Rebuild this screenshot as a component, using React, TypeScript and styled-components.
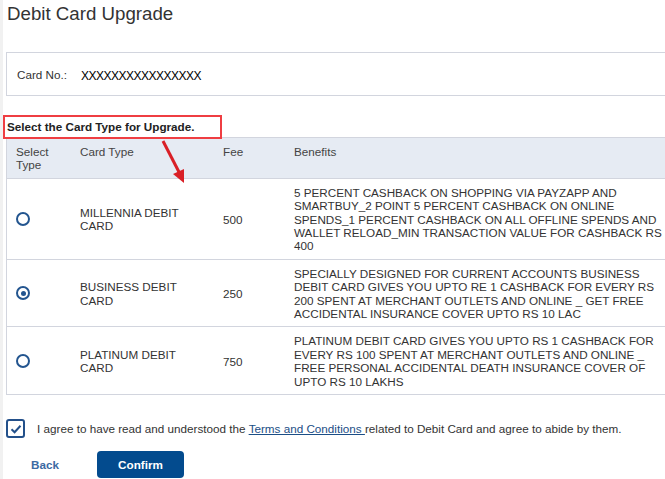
import React from "react"
import styled, { createGlobalStyle } from "styled-components"

const GlobalStyle = createGlobalStyle`
    html, body {
        margin:0;
        padding:0;
        background:#ffffff;
        overflow:hidden;
    }
    body {
        font-family:"Liberation Sans", Arial, sans-serif;
        color:#333333;
    }
`

const Page = styled.div`
    position:relative;
    width:680px;
    height:479px;
    border-left:3px solid #f1f1f1;
    padding-left:3px;
    box-sizing:border-box;
`

const Title = styled.h1`
    margin:0;
    padding:2px 0 0 1px;
    height:48px;
    box-sizing:border-box;
    font-size:18.7px;
    font-weight:normal;
    color:#333333;
    line-height:24px;
`

const CardBox = styled.div`
    display:flex;
    align-items:center;
    height:44px;
    margin-top:4px;
    border:1px solid #d2d5de;
    box-sizing:border-box;
    padding-left:10px;
`

const CardLabel = styled.span`
    width:64px;
    font-size:11.7px;
    color:#333333;
`

const CardNumber = styled.span`
    font-size:12px;
    letter-spacing:-0.5px;
    color:#000000;
    padding-top:3px;
`

const SectionLabel = styled.div`
    display:inline-block;
    margin:19px 0 -2px -3px;
    width:219px;
    height:24px;
    box-sizing:border-box;
    border:2px solid #ef3e42;
    padding:3px 0 0 2px;
    font-size:11.7px;
    font-weight:bold;
    color:#222222;
    position:relative;
    z-index:1;
`

const Table = styled.table`
    width:100%;
    border-collapse:collapse;
    border:1px solid #d2d5de;
    font-size:11.7px;
    line-height:13.4px;
`

const HeadCell = styled.th<{ $w?: number }>`
    width:${(p) => (p.$w ? `${p.$w}px` : "auto")};
    background:#e6ebf3;
    font-weight:normal;
    text-align:left;
    vertical-align:top;
    padding:7px 10px 6px 10px;
    color:#444444;
    height:26px;
    box-sizing:content-box;
    &:first-child {
        padding-left:9px;
    }
`

const Row = styled.tr`
    border-top:1px solid #d2d5de;
`

const Cell = styled.td`
    padding:7px 10px 6px 10px;
    vertical-align:middle;
    color:#333333;
`

const RadioMark = styled.span<{ $on?: boolean }>`
    display:inline-block;
    width:14px;
    height:14px;
    box-sizing:border-box;
    border:2px solid #23558f;
    border-radius:50%;
    position:relative;
    margin:2px 0 0 -1px;
    &::after {
        content:"";
        display:${(p) => (p.$on ? "block" : "none")};
        position:absolute;
        left:2.5px;
        top:2.5px;
        width:5px;
        height:5px;
        border-radius:50%;
        background:#23558f;
    }
`

const Arrow = styled.svg`
    position:absolute;
    left:150px;
    top:138px;
    overflow:visible;
    z-index:2;
`

const AgreeRow = styled.div`
    display:flex;
    align-items:center;
    gap:12px;
    margin-top:24px;
    font-size:11.7px;
    color:#333333;
`

const CheckBox = styled.span`
    width:19px;
    height:19px;
    box-sizing:border-box;
    border:2px solid #23508a;
    border-radius:3px;
    display:flex;
    align-items:center;
    justify-content:center;
    flex-shrink:0;
`

const TermsLink = styled.a`
    color:#1b4e86;
    text-decoration:underline;
    cursor:pointer;
`

const Actions = styled.div`
    display:flex;
    align-items:center;
    gap:38px;
    margin-top:13px;
    padding-left:25px;
`

const BackLink = styled.a`
    font-size:11.7px;
    font-weight:bold;
    color:#3c6aa3;
    cursor:pointer;
`

const ConfirmButton = styled.button`
    width:87px;
    height:27px;
    border:none;
    border-radius:4px;
    background:#034b8e;
    color:#ffffff;
    font-family:inherit;
    font-size:11.7px;
    font-weight:bold;
    cursor:pointer;
`

type CardRow = {
    name: string
    fee: string
    benefits: string
    selected?: boolean
}

const rows: CardRow[] = [
    {
        name: "MILLENNIA DEBIT CARD",
        fee: "500",
        benefits:
            "5 PERCENT CASHBACK ON SHOPPING VIA PAYZAPP AND SMARTBUY_2 POINT 5 PERCENT CASHBACK ON ONLINE SPENDS_1 PERCENT CASHBACK ON ALL OFFLINE SPENDS AND WALLET RELOAD_MIN TRANSACTION VALUE FOR CASHBACK RS 400",
    },
    {
        name: "BUSINESS DEBIT CARD",
        fee: "250",
        benefits:
            "SPECIALLY DESIGNED FOR CURRENT ACCOUNTS BUSINESS DEBIT CARD GIVES YOU UPTO RE 1 CASHBACK FOR EVERY RS 200 SPENT AT MERCHANT OUTLETS AND ONLINE _ GET FREE ACCIDENTAL INSURANCE COVER UPTO RS 10 LAC",
        selected: true,
    },
    {
        name: "PLATINUM DEBIT CARD",
        fee: "750",
        benefits:
            "PLATINUM DEBIT CARD GIVES YOU UPTO RS 1 CASHBACK FOR EVERY RS 100 SPENT AT MERCHANT OUTLETS AND ONLINE _ FREE PERSONAL ACCIDENTAL DEATH INSURANCE COVER OF UPTO RS 10 LAKHS",
    },
]

const App = () => {
    return (
        <Page>
            <GlobalStyle />
            <Title>Debit Card Upgrade</Title>
            <CardBox>
                <CardLabel>Card No.:</CardLabel>
                <CardNumber>XXXXXXXXXXXXXXXX</CardNumber>
            </CardBox>
            <SectionLabel>Select the Card Type for Upgrade.</SectionLabel>
            <Table>
                <thead>
                    <tr>
                        <HeadCell $w={44}>Select Type</HeadCell>
                        <HeadCell $w={123}>Card Type</HeadCell>
                        <HeadCell $w={51}>Fee</HeadCell>
                        <HeadCell>Benefits</HeadCell>
                    </tr>
                </thead>
                <tbody>
                    {rows.map((r) => (
                        <Row key={r.name}>
                            <Cell>
                                <RadioMark $on={r.selected} />
                            </Cell>
                            <Cell>{r.name}</Cell>
                            <Cell>{r.fee}</Cell>
                            <Cell>{r.benefits}</Cell>
                        </Row>
                    ))}
                </tbody>
            </Table>
            <Arrow width="40" height="50" viewBox="0 0 40 50">
                <line x1="10" y1="3" x2="27" y2="36" stroke="#d91f26" strokeWidth="3" />
                <polygon points="20,36 31,31 31,45" fill="#d91f26" />
            </Arrow>
            <AgreeRow>
                <CheckBox>
                    <svg width="12" height="10" viewBox="0 0 12 10">
                        <path d="M1.5 5.2 L4.6 8.2 L10.5 1.8" fill="none" stroke="#23508a" strokeWidth="2" />
                    </svg>
                </CheckBox>
                <span>
                    I agree to have read and understood the <TermsLink>Terms and Conditions </TermsLink>related
                    to Debit Card and agree to abide by them.
                </span>
            </AgreeRow>
            <Actions>
                <BackLink>Back</BackLink>
                <ConfirmButton>Confirm</ConfirmButton>
            </Actions>
        </Page>
    )
}

export default App
